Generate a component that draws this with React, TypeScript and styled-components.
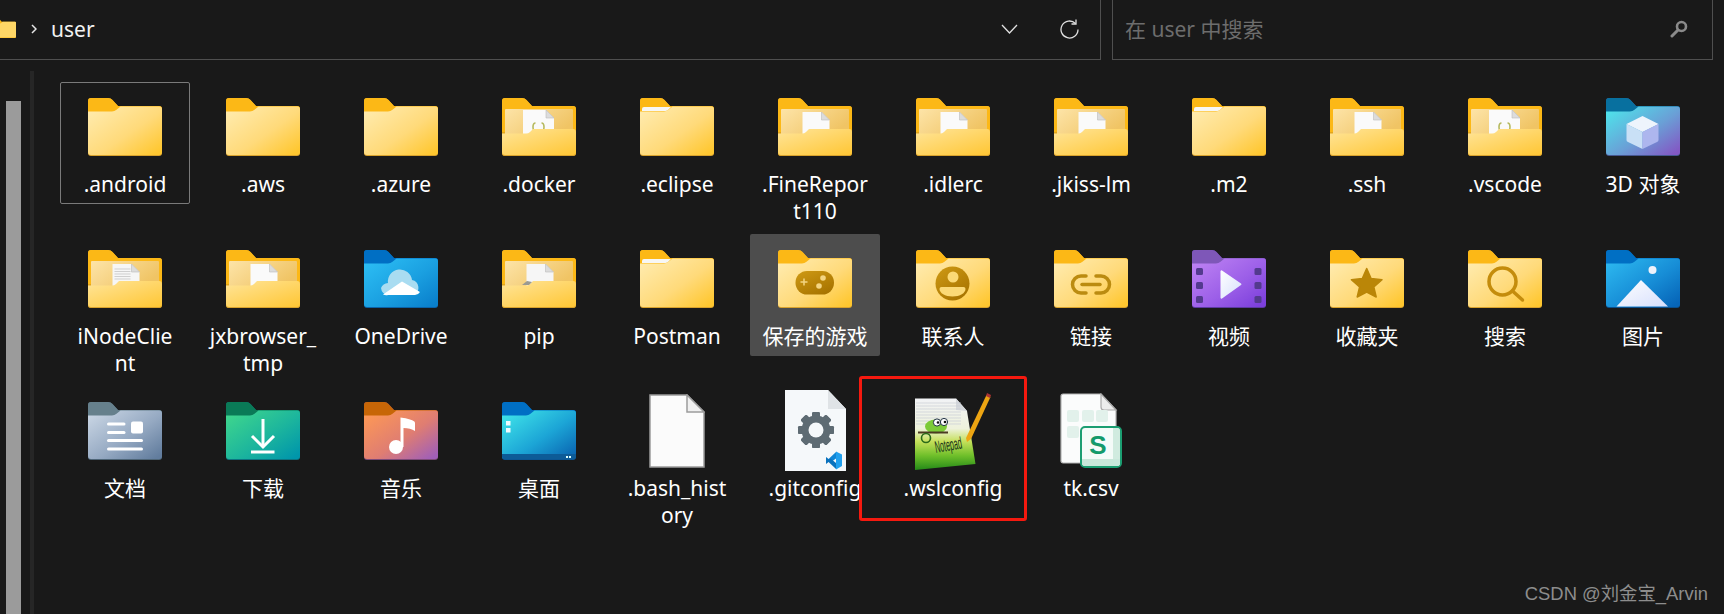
import React from "react";
import styled, { createGlobalStyle } from "styled-components";

const Global = createGlobalStyle`
  html, body { margin: 0; padding: 0; background: #191919; overflow: hidden; }
  #root { width: 1724px; height: 614px; }
`;

const UI_FONT = `"Noto Sans", "Noto Sans CJK SC", sans-serif`;

const Page = styled.div`
  position: relative;
  width: 1724px;
  height: 614px;
  overflow: hidden;
  background: #191919;
  font-family: ${UI_FONT};
  color: #fff;
  display: flex;
  flex-direction: column;
`;
const TopBar = styled.header`
  display: flex;
  gap: 11px;
  height: 60px;
  flex: none;
`;
const AddressBar = styled.div`
  width: 1101px;
  box-sizing: border-box;
  display: flex;
  align-items: center;
  border-right: 1px solid #4f4f4f;
  border-bottom: 1px solid #4f4f4f;
  padding-bottom: 2px;
`;
const CrumbFolder = styled.svg`
  width: 24px;
  height: 19px;
  margin-left: -8px;
  flex: none;
`;
const Crumb = styled.span`
  font-size: 21px;
  line-height: 26px;
  margin-left: 14px;
  color: #f2f2f2;
`;
const Spacer = styled.div`
  flex: 1;
`;
const BarIcon = styled.svg<{ $mr: number; $ml?: number }>`
  flex: none;
  margin-left: ${(p) => p.$ml ?? 0}px;
  margin-right: ${(p) => p.$mr}px;
`;
const SearchBox = styled.div`
  width: 601px;
  box-sizing: border-box;
  display: flex;
  align-items: center;
  border-left: 1px solid #4f4f4f;
  border-right: 1px solid #4f4f4f;
  border-bottom: 1px solid #4f4f4f;
  padding: 0 24px 2px 12px;
`;
const Placeholder = styled.span`
  flex: 1;
  font-size: 21px;
  line-height: 26px;
  color: #6d6d6d;
`;
const Main = styled.main`
  flex: 1;
  display: flex;
  min-height: 0;
`;
const Rail = styled.div`
  width: 60px;
  flex: none;
  display: flex;
`;
const RailThumb = styled.div`
  width: 15px;
  margin: 41px 0 0 6px;
  background: #9b9b9b;
`;
const RailLine = styled.div`
  width: 4px;
  margin: 11px 0 0 9px;
  background: #262626;
`;
const Grid = styled.div`
  display: grid;
  grid-template-columns: repeat(12, 130px);
  grid-auto-rows: 122px;
  column-gap: 8px;
  row-gap: 30px;
  padding-top: 22px;
`;
const Tile = styled.div<{ $state?: "selected" | "hover" }>`
  box-sizing: border-box;
  display: flex;
  flex-direction: column;
  align-items: center;
  border-radius: 2px;
  border: 1px solid ${(p) => (p.$state === "selected" ? "#7a7a7a" : "transparent")};
  background: ${(p) => (p.$state === "hover" ? "#4d4d4d" : "transparent")};
`;
const IconArea = styled.div`
  height: 87px;
  width: 100%;
  flex: none;
  display: flex;
  align-items: center;
  justify-content: center;
`;
const Label = styled.div`
  margin-top: 1px;
  font-size: 21px;
  line-height: 27px;
  text-align: center;
  white-space: pre;
`;
const Callout = styled.div`
  position: absolute;
  left: 859px;
  top: 376px;
  width: 168px;
  height: 145px;
  box-sizing: border-box;
  border: 3px solid #f5190f;
  border-radius: 3px;
  pointer-events: none;
`;
const Watermark = styled.div`
  position: absolute;
  right: 16px;
  top: 583px;
  font-family: "Liberation Sans", "Noto Sans CJK SC", sans-serif;
  font-size: 18.4px;
  line-height: 22px;
  color: #8d8d8d;
`;

const TAB = "M3 0H20a6 6 0 0 1 4.5 2L30 8H71a3 3 0 0 1 3 3V55a3 3 0 0 1-3 3H3a3 3 0 0 1-3-3V3a3 3 0 0 1 3-3Z";
const FRONT = "M0 13.500H24a7 7 0 0 0 4.500-1.700L32.500 8.500H71a3 3 0 0 1 3 3V54a3 3 0 0 1-3 3H3a3 3 0 0 1-3-3Z";
const OPEN_FRONT = "M0 35.500H24a6 6 0 0 0 4-1.500L31 31H71a3 3 0 0 1 3 3V54a3 3 0 0 1-3 3H3a3 3 0 0 1-3-3Z";

type Palette = { tab: string; from: string; mid: string; to: string; edge: string };
const palettes: Record<string, Palette> = {
  yellow: { tab: "#fcb816", from: "#ffeaab", mid: "#ffda7a", to: "#ffc72f", edge: "#d9a22c" },
  cube: { tab: "#08709f", from: "#4fe0ea", mid: "#6a9fd6", to: "#8358c4", edge: "#45568f" },
  cloud: { tab: "#006fc4", from: "#2bbcf3", mid: "#1a9fe0", to: "#0a80cc", edge: "#0a62a8" },
  picture: { tab: "#006fc4", from: "#2bb5ee", mid: "#178dd6", to: "#0665b8", edge: "#0a4f8c" },
  video: { tab: "#7e57b8", from: "#bb80f2", mid: "#9c5fe8", to: "#7c3fdc", edge: "#5c3aa0" },
  docs: { tab: "#66808c", from: "#c6d3e2", mid: "#95a9c2", to: "#627d9e", edge: "#4e6577" },
  download: { tab: "#0a7a57", from: "#3dd48e", mid: "#1cb59d", to: "#0096ab", edge: "#0c7480" },
  music: { tab: "#c76607", from: "#fc9757", mid: "#df7d72", to: "#a05fb8", edge: "#7d4a78" },
  desktop: { tab: "#006fc4", from: "#3de0e8", mid: "#1ca5d6", to: "#0a66b2", edge: "#0a4f8c" },
};

function FolderShell({ tone, children }: { tone: string; children?: React.ReactNode }) {
  const p = palettes[tone];
  const id = `folder-${tone}`;
  return (
    <svg width="74" height="58" viewBox="0 0 74 58">
      <defs>
        <linearGradient id={id} x1="0.05" y1="0.1" x2="0.95" y2="0.95">
          <stop offset="0" stopColor={p.from} />
          <stop offset="0.55" stopColor={p.mid} />
          <stop offset="1" stopColor={p.to} />
        </linearGradient>
        <linearGradient id="glyph-amber" x1="0" y1="0" x2="0.7" y2="1">
          <stop offset="0" stopColor="#cf9a14" />
          <stop offset="1" stopColor="#a87400" />
        </linearGradient>
        <linearGradient id="glyph-white" x1="0" y1="0" x2="1" y2="1">
          <stop offset="0" stopColor="#ffffff" />
          <stop offset="1" stopColor="#d6dffc" />
        </linearGradient>
      </defs>
      <path d={TAB} fill={p.edge} />
      <path d="M3 0H20a6 6 0 0 1 4.5 2L30 8H71a3 3 0 0 1 3 3V20H0V3a3 3 0 0 1 3-3Z" fill={p.tab} />
      <path d={FRONT} fill={`url(#${id})`} />
      {children}
    </svg>
  );
}

function OpenFolder({ doc }: { doc: "blank" | "code" | "lines" | "pip" }) {
  const big = doc === "code";
  const x = big ? 21 : 24.5;
  const y = big ? 12 : 14;
  const w = big ? 31 : 27;
  return (
    <svg width="74" height="58" viewBox="0 0 74 58">
      <defs>
        <linearGradient id="open-inner" x1="0" y1="0" x2="1" y2="0.5">
          <stop offset="0" stopColor="#fde4a8" />
          <stop offset="1" stopColor="#f0c464" />
        </linearGradient>
        <linearGradient id="open-front" x1="0.05" y1="0" x2="0.95" y2="1">
          <stop offset="0" stopColor="#ffe497" />
          <stop offset="1" stopColor="#ffc736" />
        </linearGradient>
      </defs>
      <path d={TAB} fill="#e2a51b" />
      <path d="M3 0H20a6 6 0 0 1 4.500 2L30 8H71a3 3 0 0 1 3 3V34H0V3a3 3 0 0 1 3-3Z" fill="#fcb816" />
      <rect x="3" y="11" width="68" height="26" rx="1" fill="url(#open-inner)" />
      <path d={`M${x} ${y}H${x + w - 8}L${x + w} ${y + 8}V40H${x}Z`} fill={doc === "blank" || big ? "#fafafa" : "#f6f6f6"} />
      <path d={`M${x + w - 8} ${y}V${y + 8}H${x + w}Z`} fill="#dcdcdc" stroke="#bcbcbc" strokeWidth="0.6" />
      {doc === "lines" && (
        <g stroke="#cfcfcf" strokeWidth="1">
          {[19, 21.5, 24, 26.500, 29].map((ly) => (
            <line key={ly} x1={x + 2} x2={x + w - 9} y1={ly} y2={ly} />
          ))}
        </g>
      )}
      {big && (
        <g fill="none" stroke="#b5b95e" strokeWidth="1.600">
          <path d="M33.500 25c-2 0-2.500 2-2.500 4s.5 4 2.500 4" />
          <path d="M39.500 25c2 0 2.500 2 2.500 4s-.5 4-2.500 4" />
        </g>
      )}
      <path d={OPEN_FRONT} fill="#d9a22c" transform="translate(0 1)" />
      <path d={OPEN_FRONT} fill="url(#open-front)" />
      {doc === "pip" && <path d="M20 35l5-4 5 1-3 3Z" fill="#9a9a92" />}
    </svg>
  );
}

function Sheet() {
  return (
    <FolderShell tone="yellow">
      <path d="M2 13V11a2 2 0 0 1 2-2H31l-2.500 2.500a5 5 0 0 1-3 1.500Z" fill="#f7f7f5" />
    </FolderShell>
  );
}

const glyphs: Record<string, { tone: string; art: React.ReactNode }> = {
  plain: { tone: "yellow", art: null },
  cube: {
    tone: "cube",
    art: (
      <g>
        <path d="M36.500 18L52.500 26 36.500 34 20.500 26Z" fill="#eef4fc" />
        <path d="M20.500 26L36.500 34V51L22 44a2 2 0 0 1-1.500-2Z" fill="#c9e0f6" />
        <path d="M52.500 26L36.500 34V51L51 44a2 2 0 0 0 1.500-2Z" fill="#adb6ee" />
      </g>
    ),
  },
  cloud: {
    tone: "cloud",
    art: (
      <g>
        <path d="M24 33a12 12 0 0 1 24-3a8 8 0 0 1 2 15H24a8 8 0 0 1-7-7a8 8 0 0 1 7-5Z" fill="#a9dcf1" />
        <path d="M19 44.500L38 31.500 56 42a6 6 0 0 1-5 3H24a8 8 0 0 1-5-.5Z" fill="#fff" />
      </g>
    ),
  },
  game: {
    tone: "yellow",
    art: (
      <g>
        <rect x="17.500" y="21" width="38.500" height="23.500" rx="11.500" fill="url(#glyph-amber)" />
        <path d="M26 28.500v7M22.500 32h7" stroke="#f4d582" strokeWidth="1.500" />
        <circle cx="45" cy="28" r="2.800" fill="#f4d582" />
        <circle cx="41" cy="36" r="2.800" fill="#f4d582" />
      </g>
    ),
  },
  contact: {
    tone: "yellow",
    art: (
      <g>
        <ellipse cx="36.500" cy="33.500" rx="17" ry="17" fill="url(#glyph-amber)" />
        <circle cx="37" cy="27" r="5.500" fill="#fbd976" />
        <path d="M25.500 37h22a2 2 0 0 1 2 2c0 4-5.500 7.500-13 7.500s-13-3.500-13-7.500a2 2 0 0 1 2-2Z" fill="#fbd976" />
      </g>
    ),
  },
  link: {
    tone: "yellow",
    art: (
      <g fill="none" stroke="#bb8b10" strokeWidth="3.500" strokeLinecap="round">
        <path d="M32 26H27a8.500 8.500 0 0 0 0 17H32" />
        <path d="M42 26H47a8.500 8.500 0 0 1 0 17H42" />
        <path d="M28 34.500H46" />
      </g>
    ),
  },
  video: {
    tone: "video",
    art: (
      <g>
        {[18, 32, 46].map((y) => (
          <g key={y} fill="#533a8e">
            <rect x="4" y={y} width="7" height="7" rx="1.500" />
            <rect x="62.500" y={y} width="7" height="7" rx="1.500" />
          </g>
        ))}
        <path d="M28.500 21.500a1 1 0 0 1 1.500-1L49 33.500a1 1 0 0 1 0 1.600L30 48.500a1 1 0 0 1-1.500-1Z" fill="url(#glyph-white)" />
      </g>
    ),
  },
  star: {
    tone: "yellow",
    art: (
      <path
        d="M36.700 18.500L41.100 28.600 52 29.700 43.800 37 46.200 47 36.700 42.200 27.200 47 29.600 37 21.400 29.700 32.300 28.600Z"
        fill="#ba8608"
        stroke="#ba8608"
        strokeWidth="1.500"
        strokeLinejoin="round"
      />
    ),
  },
  search: {
    tone: "yellow",
    art: (
      <g fill="none" stroke="#c48c0c" strokeLinecap="round">
        <ellipse cx="34.500" cy="31.500" rx="13.500" ry="13.500" strokeWidth="3.500" />
        <path d="M44.500 41L54.500 50" strokeWidth="3.500" />
      </g>
    ),
  },
  picture: {
    tone: "picture",
    art: (
      <g>
        <circle cx="46.500" cy="20" r="4" fill="#eef2fb" />
        <path d="M35 30L62 56.500H10.500Z" fill="url(#glyph-white)" />
      </g>
    ),
  },
  docs: {
    tone: "docs",
    art: (
      <g fill="#fff">
        <rect x="19" y="20.500" width="18.500" height="3" rx="1.500" />
        <rect x="19" y="29" width="18.500" height="3" rx="1.500" />
        <rect x="19" y="37" width="36" height="3" rx="1.500" />
        <rect x="19" y="45.500" width="36" height="3" rx="1.500" />
        <rect x="43" y="19.500" width="12" height="12" rx="2" />
      </g>
    ),
  },
  download: {
    tone: "download",
    art: (
      <g fill="none" stroke="#fff" strokeWidth="3">
        <path d="M37 17V45" />
        <path d="M26 34L37 45 48 34" />
        <path d="M25 50H48.500" />
      </g>
    ),
  },
  music: {
    tone: "music",
    art: (
      <g fill="#fff">
        <circle cx="32" cy="45" r="7" />
        <path d="M36.500 15.500c4 .5 10 1.500 13 3.500a2 2 0 0 1 1.500 2v8c-3-2-7-3-11.500-3V45h-3Z" />
      </g>
    ),
  },
  desktop: {
    tone: "desktop",
    art: (
      <g>
        <rect x="4" y="19" width="4.500" height="4.500" fill="#f0fbff" />
        <rect x="4" y="26" width="4.500" height="4.500" fill="#f0fbff" />
        <path d="M0 52H74V54a3 3 0 0 1-3 3.500H3a3 3 0 0 1-3-3.500Z" fill="#0d5b97" />
        <rect x="64" y="54" width="2" height="2" fill="#dff" />
        <rect x="67" y="54" width="2" height="2" fill="#dff" />
      </g>
    ),
  },
};

function BlankFile() {
  return (
    <svg width="56" height="74" viewBox="0 0 56 74">
      <path d="M1 1H38L55 18V73H1Z" fill="#fbfbfb" stroke="#9c9c9c" strokeWidth="1.500" />
      <path d="M38 1V18H55Z" fill="#f0f0f0" stroke="#9c9c9c" strokeWidth="1.500" />
    </svg>
  );
}

function GitConfigFile() {
  const teeth = [0, 45, 90, 135, 180, 225, 270, 315];
  return (
    <svg width="61" height="81" viewBox="0 0 61 81">
      <path d="M0 0H43L61 19V81H0Z" fill="#f5f8fa" />
      <path d="M43 0V19H61Z" fill="#dfe3e6" />
      <g fill="#5e6b73">
        {teeth.map((a) => (
          <rect key={a} x="27" y="22" width="8" height="36" rx="1.500" transform={`rotate(${a} 31 40)`} />
        ))}
      </g>
      <circle cx="31" cy="40" r="11" fill="none" stroke="#5e6b73" strokeWidth="7" />
      <circle cx="31" cy="40" r="7.500" fill="#f5f8fa" />
      <path d="M51 62L42 70.500 45.500 72.500 51 68.500Z" fill="#0f86d6" />
      <path d="M51 79L42 70.500 45.500 68.500 51 73Z" fill="#0a72bd" />
      <path d="M51 61.500L57 64.500V76L51 79.500Z" fill="#21a0ee" />
      <path d="M41 67l4.500 3.500L41 74Z" fill="#0a72bd" />
    </svg>
  );
}

function NotepadFile() {
  return (
    <svg width="76" height="78" viewBox="0 0 76 78">
      <defs>
        <linearGradient id="np-page" x1="0" y1="0" x2="0" y2="1">
          <stop offset="0" stopColor="#f2f3f6" />
          <stop offset="0.42" stopColor="#eef2dc" />
          <stop offset="0.6" stopColor="#c5e05a" />
          <stop offset="0.8" stopColor="#6fbf2a" />
          <stop offset="1" stopColor="#248a18" />
        </linearGradient>
      </defs>
      <path d="M0 6.500H41L52 19 60.500 72 0 78Z" fill="url(#np-page)" />
      <path d="M41 6.500V18L52 19Z" fill="#d5d8dc" />
      <g stroke="#c9cdd6" strokeWidth="0.700">
        {[11, 14, 17, 20, 23, 26, 29, 32].map((y) => (
          <line key={y} x1="1" x2="46" y1={y} y2={y} />
        ))}
      </g>
      <path d="M71.500 3L51 46 52 50 56 47 75.500 5Z" fill="#eda512" />
      <path d="M72 1l4 2-1 3-4-2Z" fill="#a33" />
      <g>
        <ellipse cx="21" cy="34.500" rx="11" ry="7" fill="#7ccb38" />
        <circle cx="22" cy="30.500" r="3.600" fill="#fff" stroke="#234" strokeWidth="1" />
        <circle cx="29" cy="30" r="3.600" fill="#fff" stroke="#234" strokeWidth="1" />
        <circle cx="23" cy="30.500" r="1.300" fill="#111" />
        <circle cx="30" cy="30" r="1.300" fill="#111" />
        <path d="M3 40.500H33" stroke="#4b3a22" strokeWidth="2" />
        <circle cx="11" cy="46" r="4.500" fill="none" stroke="#2b6a1a" strokeWidth="1.600" />
      </g>
      <text x="21" y="61" fontFamily='"Liberation Sans Narrow","Liberation Sans",sans-serif' fontSize="17" fill="#16301a" textLength="27" lengthAdjust="spacingAndGlyphs" transform="rotate(-10 21 61)">
        Notepad
      </text>
    </svg>
  );
}

function CsvFile() {
  const cells = [
    [7, 17],
    [22, 17],
    [36, 17],
    [7, 33],
  ];
  return (
    <svg width="62" height="75" viewBox="0 0 62 75">
      <path d="M3 1H41L56 17V68a2 2 0 0 1-2 2H3a2 2 0 0 1-2-2V3a2 2 0 0 1 2-2Z" fill="#fbfcfc" stroke="#b5b5b5" strokeWidth="1.200" />
      <path d="M41 1V14a3 3 0 0 0 3 3H56Z" fill="#ececec" stroke="#a9a9a9" strokeWidth="1.200" />
      {cells.map(([x, y]) => (
        <rect key={`${x}-${y}`} x={x} y={y} width="12" height="12" rx="2" fill="#e2f1eb" />
      ))}
      <rect x="21" y="34" width="40" height="40" rx="4" fill="#f4fbf8" stroke="#1c9e72" strokeWidth="2" />
      <path d="M22 66H60V70a3 3 0 0 1-3 3H25a3 3 0 0 1-3-3Z" fill="#c9e8da" />
      <path d="M53 35H57a3 3 0 0 1 3 3V70a3 3 0 0 1-3 3H53Z" fill="#c9e8da" opacity=".85" />
      <text x="38" y="61" textAnchor="middle" fontFamily='"Liberation Sans",sans-serif' fontWeight="700" fontSize="26" fill="#149a6b">
        S
      </text>
    </svg>
  );
}

function ItemIcon({ kind }: { kind: string }) {
  switch (kind) {
    case "blank":
    case "code":
    case "lines":
    case "pip":
      return <OpenFolder doc={kind} />;
    case "sheet":
      return <Sheet />;
    case "file":
      return <BlankFile />;
    case "git":
      return <GitConfigFile />;
    case "notepad":
      return <NotepadFile />;
    case "csv":
      return <CsvFile />;
    default: {
      const g = glyphs[kind];
      return <FolderShell tone={g.tone}>{g.art}</FolderShell>;
    }
  }
}

type Item = { label: string; kind: string; state?: "selected" | "hover" };
const items: Item[] = [
  { label: ".android", kind: "plain", state: "selected" },
  { label: ".aws", kind: "plain" },
  { label: ".azure", kind: "plain" },
  { label: ".docker", kind: "code" },
  { label: ".eclipse", kind: "sheet" },
  { label: ".FineRepor\nt110", kind: "blank" },
  { label: ".idlerc", kind: "blank" },
  { label: ".jkiss-lm", kind: "blank" },
  { label: ".m2", kind: "sheet" },
  { label: ".ssh", kind: "blank" },
  { label: ".vscode", kind: "code" },
  { label: "3D 对象", kind: "cube" },
  { label: "iNodeClie\nnt", kind: "lines" },
  { label: "jxbrowser_\ntmp", kind: "blank" },
  { label: "OneDrive", kind: "cloud" },
  { label: "pip", kind: "pip" },
  { label: "Postman", kind: "sheet" },
  { label: "保存的游戏", kind: "game", state: "hover" },
  { label: "联系人", kind: "contact" },
  { label: "链接", kind: "link" },
  { label: "视频", kind: "video" },
  { label: "收藏夹", kind: "star" },
  { label: "搜索", kind: "search" },
  { label: "图片", kind: "picture" },
  { label: "文档", kind: "docs" },
  { label: "下载", kind: "download" },
  { label: "音乐", kind: "music" },
  { label: "桌面", kind: "desktop" },
  { label: ".bash_hist\nory", kind: "file" },
  { label: ".gitconfig", kind: "git" },
  { label: ".wslconfig", kind: "notepad" },
  { label: "tk.csv", kind: "csv" },
];

export default function App() {
  return (
    <Page>
      <Global />
      <TopBar>
        <AddressBar>
          <CrumbFolder viewBox="0 0 74 58">
            <path d={TAB} fill="#fcb816" />
            <path d={FRONT} fill="#ffd766" />
          </CrumbFolder>
          <BarIcon $ml={15} $mr={0} width="6" height="10" viewBox="0 0 6 10">
            <path d="M1 1l4 4-4 4" fill="none" stroke="#e6e6e6" strokeWidth="1.500" />
          </BarIcon>
          <Crumb>user</Crumb>
          <Spacer />
          <BarIcon $mr={41} width="17" height="10" viewBox="0 0 17 10">
            <path d="M1 1l7.500 8L16 1" fill="none" stroke="#e0e0e0" strokeWidth="1.300" />
          </BarIcon>
          <BarIcon $mr={20} width="21" height="20" viewBox="0 0 21 20">
            <path d="M16.500 4.500A8.500 8.500 0 1 0 19 10.500" fill="none" stroke="#e0e0e0" strokeWidth="1.300" />
            <path d="M17 .5V5H12.500" fill="none" stroke="#e0e0e0" strokeWidth="1.300" />
          </BarIcon>
        </AddressBar>
        <SearchBox>
          <Placeholder>在 user 中搜索</Placeholder>
          <svg width="18" height="18" viewBox="0 0 18 18">
            <circle cx="11.500" cy="6.500" r="4.500" fill="none" stroke="#8a8a8a" strokeWidth="2.600" />
            <path d="M8 10L2 16" stroke="#8a8a8a" strokeWidth="3" strokeLinecap="round" />
          </svg>
        </SearchBox>
      </TopBar>
      <Main>
        <Rail>
          <RailThumb />
          <RailLine />
        </Rail>
        <Grid>
          {items.map((it) => (
            <Tile key={it.label} $state={it.state}>
              <IconArea>
                <ItemIcon kind={it.kind} />
              </IconArea>
              <Label>{it.label}</Label>
            </Tile>
          ))}
        </Grid>
      </Main>
      <Callout />
      <Watermark>CSDN @刘金宝_Arvin</Watermark>
    </Page>
  );
}
